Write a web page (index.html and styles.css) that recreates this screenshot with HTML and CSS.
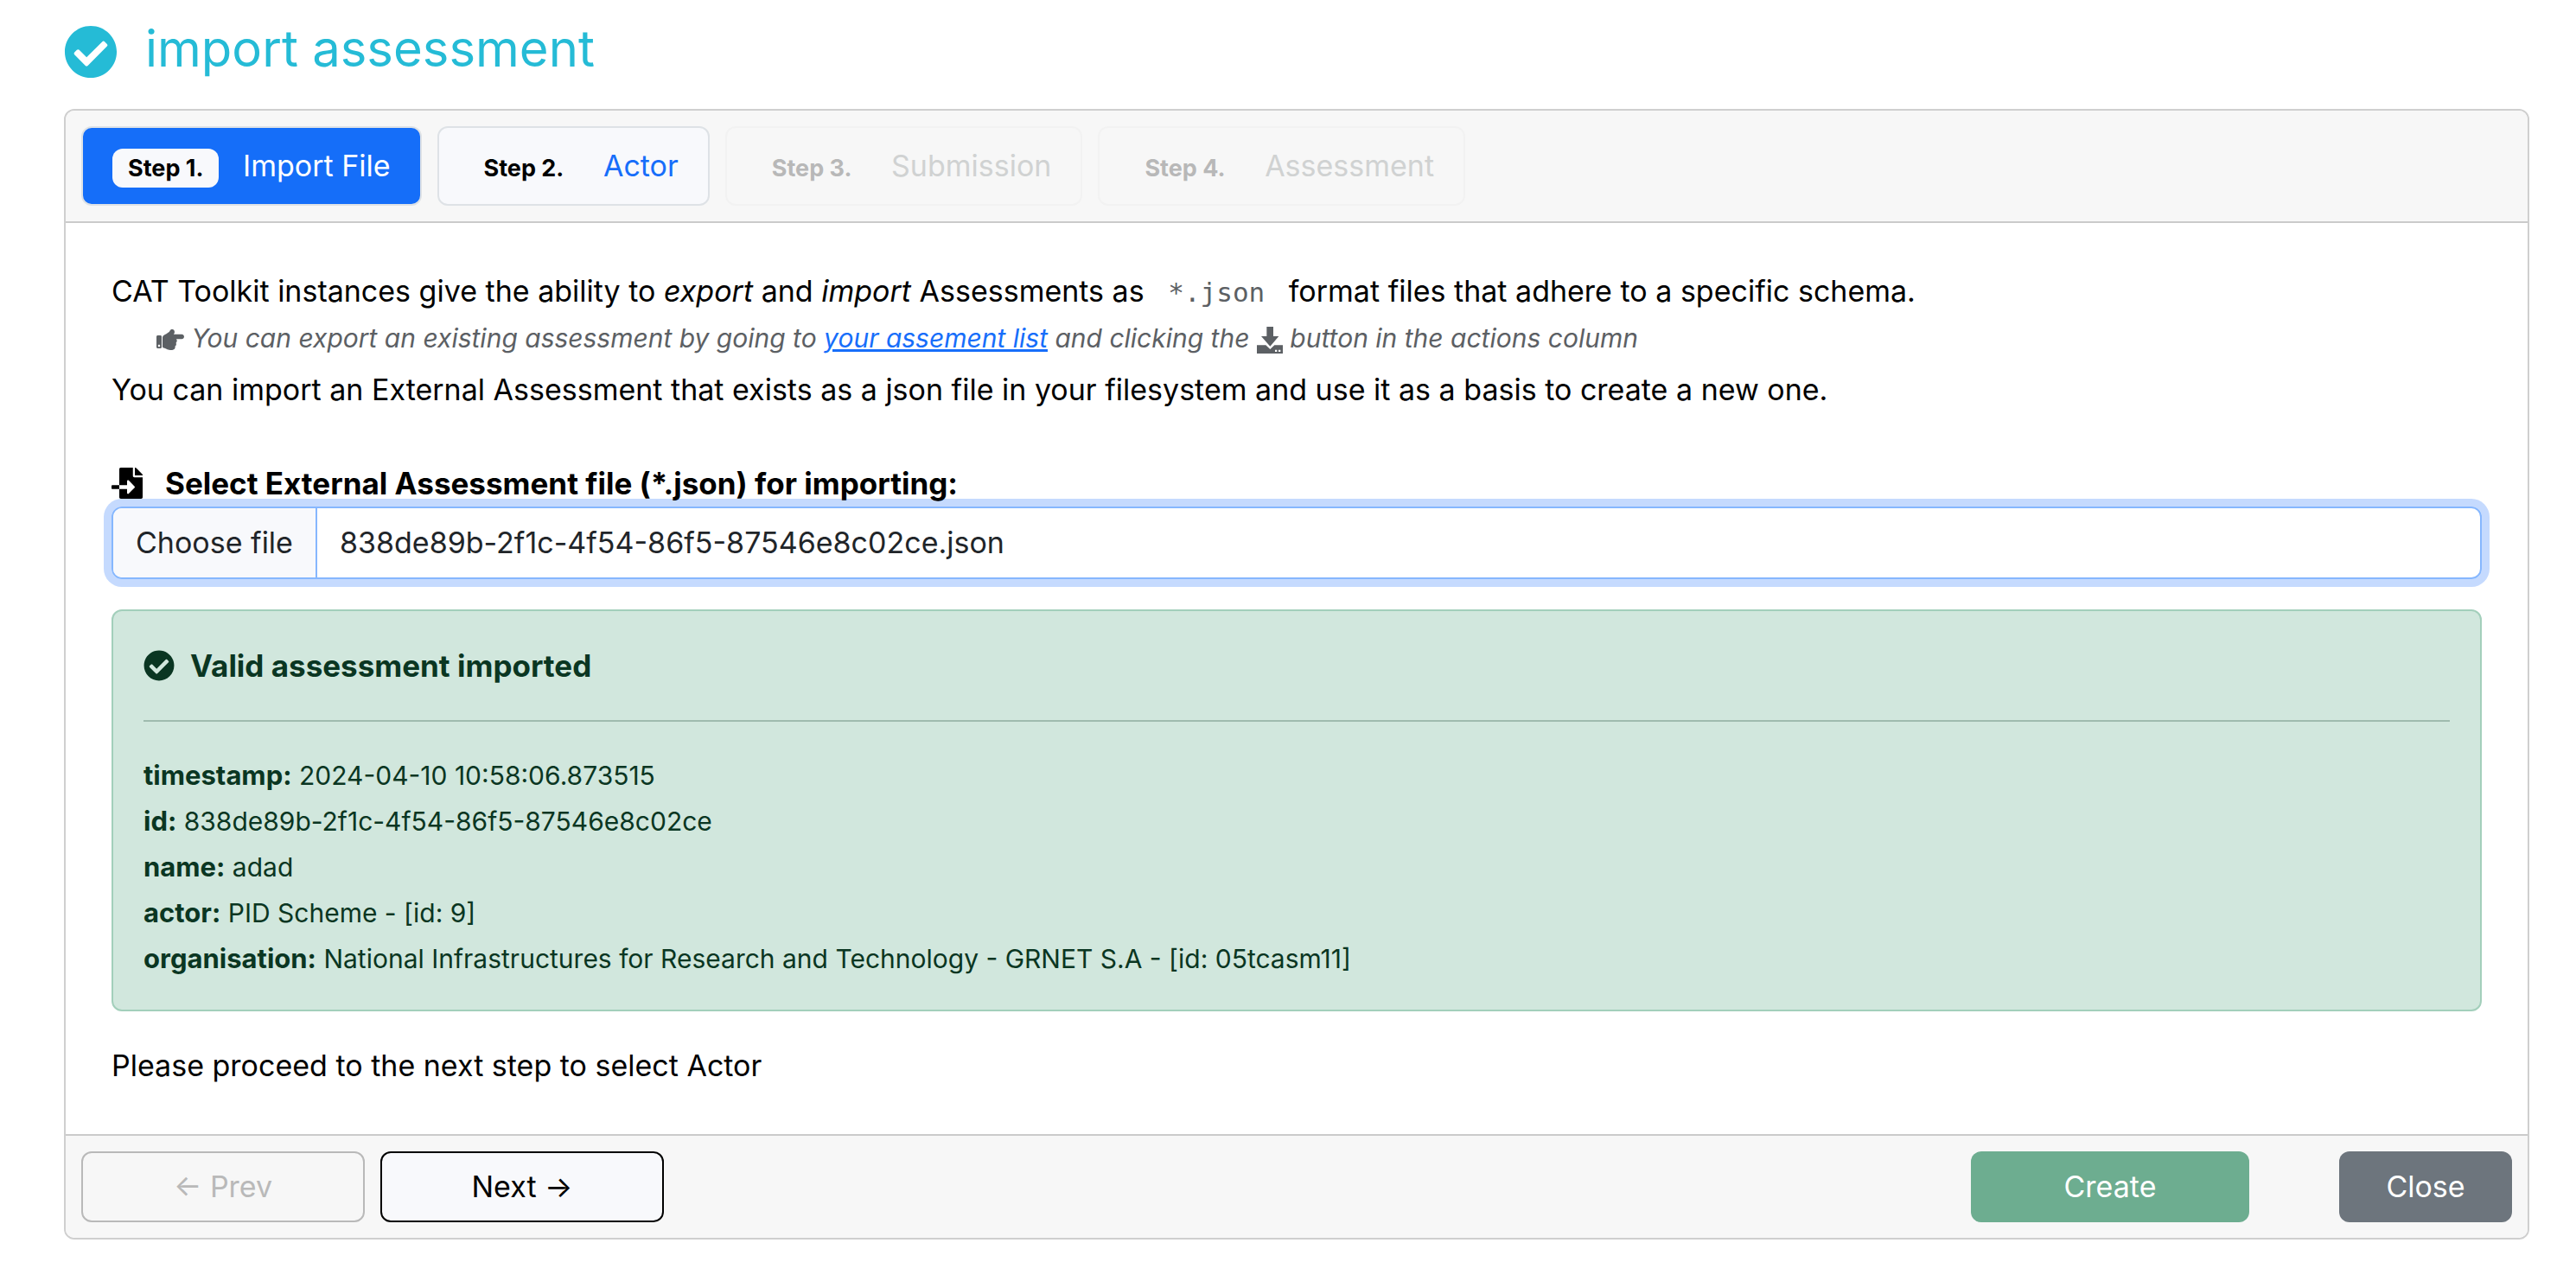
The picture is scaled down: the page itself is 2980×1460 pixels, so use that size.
FILE: index.html
```html
<!DOCTYPE html>
<html lang="en">
<head>
<meta charset="utf-8">
<title>Import assessment</title>
<link rel="stylesheet" href="styles.css">
</head>
<body>
<main class="page">
  <h1 class="page-title">
    <svg class="title-icon" viewBox="0 0 512 512" aria-hidden="true"><path fill="currentColor" d="M504 256c0 136.967-111.033 248-248 248S8 392.967 8 256 119.033 8 256 8s248 111.033 248 248zM227.314 387.314l184-184c6.248-6.248 6.248-16.379 0-22.627l-22.627-22.627c-6.248-6.249-16.379-6.249-22.628 0L216 308.118l-70.059-70.059c-6.248-6.248-16.379-6.248-22.628 0l-22.627 22.627c-6.248 6.248-6.248 16.379 0 22.627l104 104c6.249 6.249 16.379 6.249 22.628.001z"/></svg>
    <span>import assessment</span>
  </h1>
  <div class="card">
    <nav class="tabs" aria-label="Steps">
      <button type="button" class="tab tab-active"><span class="step">Step 1.</span> Import File</button>
      <button type="button" class="tab"><span class="step">Step 2.</span> Actor</button>
      <button type="button" class="tab" disabled><span class="step">Step 3.</span> Submission</button>
      <button type="button" class="tab" disabled><span class="step">Step 4.</span> Assessment</button>
    </nav>
    <div class="body">
      <p class="text">CAT Toolkit instances give the ability to <em>export</em> and <em>import</em> Assessments as <code>*.json</code> format files that adhere to a specific schema.</p>
      <p class="hint">
        <svg class="hint-icon" viewBox="0 0 512 512" aria-hidden="true"><path fill="currentColor" d="M512 199.652c0 23.625-20.65 43.826-44.8 43.826h-99.851c16.34 17.048 18.346 49.766-6.299 70.944 14.288 22.829 2.147 53.017-16.45 62.315C353.574 425.878 322.654 448 272 448c-2.746 0-13.276-.203-16-.195-61.971.168-76.894-31.065-123.731-38.315C120.596 407.683 112 397.599 112 385.786V214.261l.002-.001c.011-18.366 10.607-35.889 28.464-43.845 28.886-12.994 95.413-49.038 107.534-77.323 7.797-18.194 21.384-29.084 40-29.092 34.222-.014 57.752 35.098 44.119 66.908-3.583 8.359-8.312 16.67-14.153 24.918H467.2c23.45 0 44.8 20.543 44.8 43.826zM96 200v192c0 13.255-10.745 24-24 24H24c-13.255 0-24-10.745-24-24V200c0-13.255 10.745-24 24-24h48c13.255 0 24 10.745 24 24zM68 368c0-11.046-8.954-20-20-20s-20 8.954-20 20 8.954 20 20 20 20-8.954 20-20z"/></svg>
        You can export an existing assessment by going to <a href="#assessments">your assement list</a> and clicking the
        <svg class="download-icon" viewBox="0 0 90 93" aria-hidden="true"><path fill="currentColor" fill-rule="evenodd" d="M34 0h23v33h19L46 68 15 33h19zM0 64h31l15 14 15-14h29v29H0zM63 80v7h7v-7zM75 80v7h7v-7z"/></svg>
        button in the actions column</p>
      <p class="text">You can import an External Assessment that exists as a json file in your filesystem and use it as a basis to create a new one.</p>
      <label class="file-label" for="file">
        <svg class="import-icon" viewBox="0 0 512 512" aria-hidden="true"><path fill="currentColor" d="M16 288c-8.800 0-16 7.200-16 16v32c0 8.800 7.200 16 16 16h112v-64zm489-183L407.100 7c-4.500-4.500-10.600-7-17-7H384v128h128v-6.100c0-6.300-2.500-12.400-7-16.900zm-153 31V0H152c-13.300 0-24 10.700-24 24v264h128v-65.200c0-14.300 17.300-21.400 27.400-11.300L379 308c6.600 6.700 6.600 17.400 0 24l-95.700 96.400c-10.100 10.100-27.400 3-27.400-11.300V352H128v136c0 13.300 10.700 24 24 24h336c13.300 0 24-10.700 24-24V160H376c-13.200 0-24-10.800-24-24z"/></svg>
        <span>Select External Assessment file (*.json) for importing:</span>
      </label>
      <div class="file-field">
        <span class="file-button">Choose file</span>
        <span class="file-name">838de89b-2f1c-4f54-86f5-87546e8c02ce.json</span>
        <input class="file-input" type="file" id="file" accept=".json">
      </div>
      <section class="alert">
        <h2 class="alert-title">
          <svg class="alert-icon" viewBox="0 0 512 512" aria-hidden="true"><path fill="currentColor" d="M504 256c0 136.967-111.033 248-248 248S8 392.967 8 256 119.033 8 256 8s248 111.033 248 248zM227.314 387.314l184-184c6.248-6.248 6.248-16.379 0-22.627l-22.627-22.627c-6.248-6.249-16.379-6.249-22.628 0L216 308.118l-70.059-70.059c-6.248-6.248-16.379-6.248-22.628 0l-22.627 22.627c-6.248 6.248-6.248 16.379 0 22.627l104 104c6.249 6.249 16.379 6.249 22.628.001z"/></svg>
          <span>Valid assessment imported</span>
        </h2>
        <hr class="rule">
        <ul class="facts">
          <li><strong>timestamp:</strong> 2024-04-10 10:58:06.873515</li>
          <li><strong>id:</strong> 838de89b-2f1c-4f54-86f5-87546e8c02ce</li>
          <li><strong>name:</strong> adad</li>
          <li><strong>actor:</strong> PID Scheme - [id: 9]</li>
          <li><strong>organisation:</strong> National Infrastructures for Research and Technology - GRNET S.A - [id: 05tcasm11]</li>
        </ul>
      </section>
      <p class="text">Please proceed to the next step to select Actor</p>
    </div>
    <footer class="footer">
      <button type="button" class="btn btn-step" disabled>← Prev</button>
      <button type="button" class="btn btn-step">Next →</button>
      <button type="button" class="btn btn-create" disabled>Create</button>
      <button type="button" class="btn btn-close">Close</button>
    </footer>
  </div>
</main>
</body>
</html>
```
FILE: styles.css
```css
*, *::before, *::after { box-sizing: border-box; }
body {
  margin: 0;
  background: #fff;
  color: #000;
  font-family: Inter, "Liberation Sans", sans-serif;
  font-size: 34px;
  line-height: 54px;
}
h1, h2, p, ul { margin: 0; padding: 0; }
button { font: inherit; }
svg { flex: none; }
.page { padding: 18px 54px 24px 74px; }

.page-title {
  display: flex;
  align-items: center;
  gap: 32px;
  height: 84px;
  margin-bottom: 24px;
  color: #25bbd6;
  font-size: 58px;
  font-weight: 400;
  line-height: 76px;
}
.title-icon { width: 62px; height: 62px; }
.page-title span { padding-bottom: 9px; }

.card {
  overflow: hidden;
  border: 2px solid #cfcfcf;
  border-radius: 12px;
}
.tabs {
  display: flex;
  gap: 18px;
  padding: 18px;
  border-bottom: 2px solid #cbcbcb;
  background: #f7f7f7;
}
.tab {
  height: 92px;
  padding: 0 34px;
  border: 2px solid #dee2e6;
  border-radius: 12px;
  background: #f8f9fc;
  color: #176efa;
}
.tab:disabled { border-color: #f2f2f2; background: #f7f7f7; color: #d0d2d2; }
.tab-active { background: #156ef9; color: #fff; }
.step {
  display: inline-block;
  margin-right: 18px;
  padding: 9px 18px;
  border-radius: 12px;
  background: #f8f9fc;
  color: #000;
  font-size: 27px;
  font-weight: 700;
  line-height: 27px;
}
.tab:disabled .step { background: none; color: #b8b8b8; }

.body { padding: 52px 53px; }
.hint {
  margin-bottom: 6px;
  padding-left: 52px;
  color: #5c6064;
  font-size: 30px;
  font-style: italic;
}
.hint-icon { width: 32px; height: 32px; vertical-align: -7px; }
.download-icon { width: 30px; height: 31px; vertical-align: -7px; }
a { color: #176efa; }
code {
  padding: 0 18px;
  color: #5c6064;
  font-family: "DejaVu Sans Mono", monospace;
  font-size: 31px;
  line-height: 1;
}
.file-label {
  position: relative;
  z-index: 1;
  display: flex;
  align-items: center;
  gap: 26px;
  margin-top: 54px;
  font-size: 35px;
  font-weight: 700;
}
.import-icon { width: 36px; height: 36px; }
.file-field {
  position: relative;
  display: flex;
  height: 84px;
  border: 2px solid #86b7fe;
  border-radius: 12px;
  box-shadow: 0 0 0 9px #c5dafe;
  color: #212529;
  line-height: 80px;
}
.file-button {
  padding: 0 26px;
  border-right: 2px solid #86b7fe;
  border-radius: 10px 0 0 10px;
  background: #f8f9fc;
}
.file-name { padding-left: 26px; }
.file-input { position: absolute; inset: 0; width: 100%; height: 100%; opacity: 0; }

.alert {
  margin: 35px 0 36px;
  padding: 36px 35px 32px;
  border: 2px solid #a3cfbb;
  border-radius: 12px;
  background: #d1e7dd;
  color: #0a3622;
}
.alert-title { display: flex; align-items: center; gap: 18px; font-size: 35px; }
.alert-icon { width: 36px; height: 36px; }
.rule { height: 2px; margin: 36px 0; border: 0; background: #9fbbae; }
.facts { list-style: none; font-size: 30px; line-height: 53px; }
.facts strong { font-size: 31px; line-height: 1; }

.footer {
  display: flex;
  gap: 18px;
  padding: 18px;
  border-top: 2px solid #cbcbcb;
  background: #f7f7f7;
}
.btn {
  height: 82px;
  padding: 0;
  border: 2px solid transparent;
  border-radius: 12px;
  color: #fff;
}
.btn-step { width: 328px; border-color: #000; background: #f8f9fc; color: #000; }
.btn-step:disabled { border-color: #b9b9b9; background: #f7f7f7; color: #b9b9b9; }
.btn-create { width: 322px; margin-left: auto; background: #6dad90; }
.btn-close { width: 200px; margin-left: 86px; background: #6d757d; }
```
